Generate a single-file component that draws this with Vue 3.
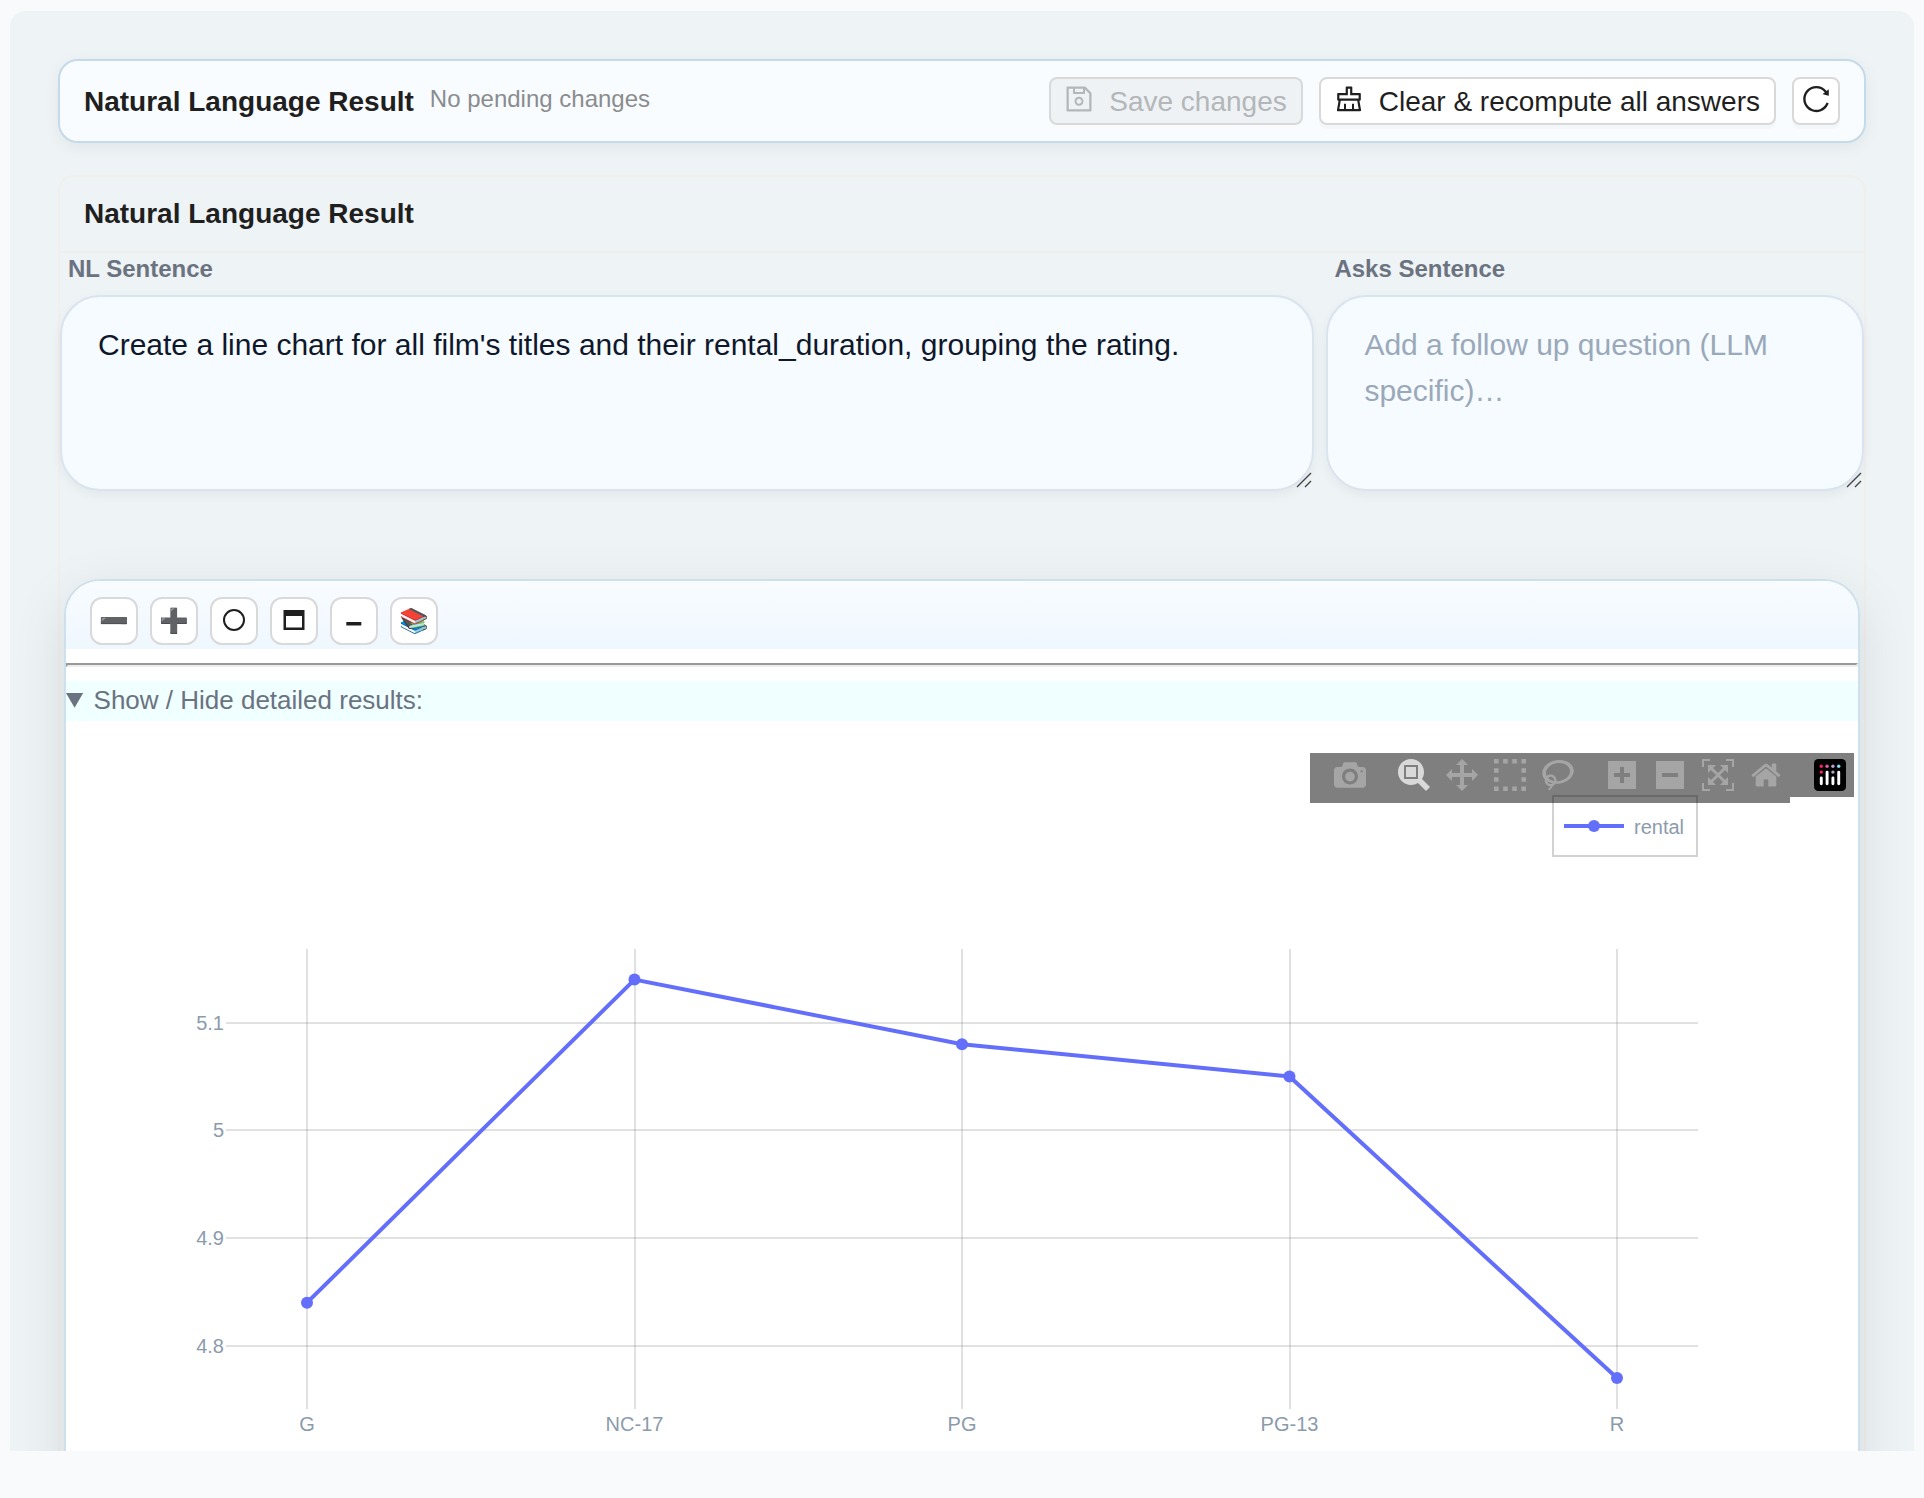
<template>
  <div class="panel">
    <header class="toolbar-card">
      <div class="toolbar-info">
        <h1 class="title">Natural Language Result</h1>
        <span class="status">{{ dirty ? 'Unsaved changes' : 'No pending changes' }}</span>
      </div>
      <div class="toolbar-actions">
        <button class="btn" type="button" :disabled="!dirty" @click="dirty = false">
          <svg class="icon" viewBox="64 64 896 896" aria-hidden="true"><path :d="actionIcons.save" /></svg>
          <span>Save changes</span>
        </button>
        <button class="btn" type="button">
          <svg class="icon" viewBox="64 64 896 896" aria-hidden="true"><path :d="actionIcons.clear" /></svg>
          <span>Clear &amp; recompute all answers</span>
        </button>
        <button class="btn btn-icon" type="button" aria-label="Reload">
          <svg class="icon" viewBox="64 64 896 896" aria-hidden="true"><path :d="actionIcons.reload" /></svg>
        </button>
      </div>
    </header>

    <section class="section">
      <div class="section-head">
        <h2 class="title">Natural Language Result</h2>
      </div>

      <div class="sentences">
        <div class="field">
          <label for="nl-sentence">NL Sentence</label>
          <textarea id="nl-sentence" v-model="sentence" spellcheck="false" @input="dirty = true"></textarea>
          <svg class="grip" viewBox="0 0 16 16" aria-hidden="true"><path d="M1 15L15 1M9 15l6-6" /></svg>
        </div>
        <div class="field">
          <label for="asks-sentence">Asks Sentence</label>
          <textarea
            id="asks-sentence"
            v-model="followUp"
            placeholder="Add a follow up question (LLM specific)…"
            @input="dirty = true"
          ></textarea>
          <svg class="grip" viewBox="0 0 16 16" aria-hidden="true"><path d="M1 15L15 1M9 15l6-6" /></svg>
        </div>
      </div>

      <div class="result-card">
        <div class="result-tools">
          <button class="tool" type="button" aria-label="Decrease">➖</button>
          <button class="tool" type="button" aria-label="Increase">➕</button>
          <button class="tool" type="button" aria-label="Reset">
            <svg viewBox="0 0 24 24" aria-hidden="true"><circle cx="12" cy="11" r="10" class="line" /></svg>
          </button>
          <button class="tool" type="button" aria-label="Maximize">
            <svg viewBox="0 0 24 24" aria-hidden="true">
              <path d="M1.5 1h21v20h-21zM4 7v11.5h16V7z" fill-rule="evenodd" />
            </svg>
          </button>
          <button class="tool" type="button" aria-label="Minimize">
            <svg viewBox="0 0 24 24" aria-hidden="true"><path d="M4.3 13h15v3.4h-15z" /></svg>
          </button>
          <button class="tool" type="button" aria-label="Library">📚</button>
        </div>
        <hr />
        <details open>
          <summary>Show / Hide detailed results:</summary>
          <div class="plot">
            <svg class="chart" viewBox="0 0 1792 820" role="img" aria-label="Rental duration by rating">
              <g class="grid">
                <line v-for="p in points" :key="p.label" :x1="p.x" :x2="p.x" :y1="area.top" :y2="area.bottom" />
                <line v-for="t in ticks" :key="t.label" :x1="area.left" :x2="area.right" :y1="t.y" :y2="t.y" />
              </g>
              <polyline class="trace" :points="tracePath" />
              <circle v-for="p in points" :key="p.label" class="marker" :cx="p.x" :cy="p.y" r="6" />
              <text v-for="t in ticks" :key="t.label" class="tick" :x="area.left - 2" :y="t.y + 7" text-anchor="end">
                {{ t.label }}
              </text>
              <text v-for="p in points" :key="p.label" class="tick" :x="p.x" :y="area.bottom + 22" text-anchor="middle">
                {{ p.label }}
              </text>
              <g>
                <rect class="legend-box" x="1487" y="47" width="144" height="60" />
                <line class="trace" x1="1498" x2="1558" y1="77" y2="77" />
                <circle class="marker" cx="1528" cy="77" r="6" />
                <text class="tick" x="1568" y="85">rental</text>
              </g>
            </svg>

            <div class="modebar">
              <div v-for="(group, i) in modebar" :key="i" class="modebar-group">
                <button
                  v-for="item in group"
                  :key="item.title"
                  class="modebar-btn"
                  :class="{ active: item.title === dragMode }"
                  type="button"
                  :aria-label="item.title"
                  @click="setMode(item)"
                >
                  <svg :viewBox="`0 0 ${item.width} 1000`" aria-hidden="true">
                    <path :d="item.path" transform="matrix(1 0 0 -1 0 850)" />
                  </svg>
                </button>
              </div>
              <div class="modebar-group modebar-logo">
                <a class="modebar-btn" href="#" aria-label="Produced with Plotly">
                  <svg viewBox="0 0 132 132" aria-hidden="true">
                    <rect width="132" height="132" rx="18" fill="#000" />
                    <circle cx="30" cy="30" r="7" fill="#ff1a6b" />
                    <circle cx="30" cy="54" r="7" fill="#ff1a6b" />
                    <circle cx="54" cy="30" r="7" fill="#e0609f" />
                    <circle cx="78" cy="30" r="7" fill="#b7a3d0" />
                    <circle cx="78" cy="54" r="7" fill="#b7a3d0" />
                    <circle cx="102" cy="30" r="7" fill="#86dcf5" />
                    <g fill="#fff">
                      <rect x="24" y="72" width="12" height="36" rx="6" />
                      <rect x="48" y="48" width="12" height="60" rx="6" />
                      <rect x="72" y="72" width="12" height="36" rx="6" />
                      <rect x="96" y="48" width="12" height="60" rx="6" />
                    </g>
                  </svg>
                </a>
              </div>
            </div>
          </div>
        </details>
      </div>
    </section>
  </div>
</template>

<script setup>
import { ref, computed } from 'vue'

const sentence = ref("Create a line chart for all film's titles and their rental_duration, grouping the rating.")
const followUp = ref('')
const dirty = ref(false)
const dragMode = ref('Zoom')

// Chart data
const rows = [
  { label: 'G', value: 4.84 },
  { label: 'NC-17', value: 5.14 },
  { label: 'PG', value: 5.08 },
  { label: 'PG-13', value: 5.05 },
  { label: 'R', value: 4.77 }
]

const area = { left: 160, right: 1632, top: 200, bottom: 660 }
const range = { min: 4.7413, max: 5.1684 }
const firstX = 241
const stepX = 327.5

function scaleY(value) {
  const ratio = (range.max - value) / (range.max - range.min)
  return area.top + ratio * (area.bottom - area.top)
}

const points = computed(() =>
  rows.map((row, i) => ({ label: row.label, x: firstX + i * stepX, y: scaleY(row.value) }))
)
const tracePath = computed(() => points.value.map((p) => `${p.x},${p.y}`).join(' '))
const ticks = [5.1, 5, 4.9, 4.8].map((value) => ({ label: String(value), y: Math.round(scaleY(value)) }))

function setMode(item) {
  if (item.mode) dragMode.value = item.title
}

const actionIcons = {
  save: 'M893.3 293.3L730.7 130.7c-7.5-7.5-16.7-13-26.7-16V112H144c-17.7 0-32 14.3-32 32v736c0 17.7 14.3 32 32 32h736c17.7 0 32-14.3 32-32V338.5c0-17-6.7-33.2-18.7-45.2zM384 184h256v104H384V184zm456 656H184V184h136v136c0 17.7 14.3 32 32 32h320c17.7 0 32-14.3 32-32V205.8l136 136V840zM512 442c-79.5 0-144 64.5-144 144s64.5 144 144 144 144-64.5 144-144-64.5-144-144-144zm0 224c-44.2 0-80-35.8-80-80s35.8-80 80-80 80 35.8 80 80-35.8 80-80 80z',
  clear: 'M899.1 869.6l-53-305.6H864c14.4 0 26-11.6 26-26V346c0-14.4-11.6-26-26-26H618V138c0-14.4-11.6-26-26-26H432c-14.4 0-26 11.6-26 26v182H160c-14.4 0-26 11.6-26 26v192c0 14.4 11.6 26 26 26h17.9l-53 305.6a25.95 25.95 0 0025.6 30.4h723c1.5 0 3-.1 4.4-.4a25.88 25.88 0 0021.2-30zM204 390h272V182h72v208h272v104H204V390zm468 440V674c0-4.4-3.6-8-8-8h-48c-4.4 0-8 3.6-8 8v156H416V674c0-4.4-3.6-8-8-8h-48c-4.4 0-8 3.6-8 8v156H202.8l45.1-260H776l45.1 260H672z',
  reload: 'M909.1 209.3l-56.4 44.1C775.8 155.1 656.2 92 521.9 92 290 92 102.3 279.5 102 511.5 101.7 743.7 289.8 932 521.9 932c181.3 0 335.8-115 394.6-276.1 1.5-4.2-.7-8.9-4.9-10.3l-56.7-19.5a8 8 0 00-10.1 4.8c-1.8 5-3.8 10-5.9 14.9-17.3 41-42.1 77.8-73.7 109.4A344.77 344.77 0 01655.9 829c-42.3 17.9-87.4 27-133.8 27-46.5 0-91.5-9.1-133.8-27A341.5 341.5 0 01279 755.2a342.16 342.16 0 01-73.7-109.4c-17.9-42.4-27-87.4-27-133.9s9.1-91.5 27-133.9c17.3-41 42.1-77.8 73.7-109.4 31.6-31.6 68.4-56.4 109.3-73.8 42.3-17.9 87.4-27 133.8-27 46.5 0 91.5 9.1 133.8 27a341.5 341.5 0 01109.3 73.8c9.9 9.9 19.2 20.4 27.8 31.4l-60.2 47a8 8 0 003 14.1l175.6 43c5 1.2 9.9-2.6 9.9-7.7l.8-180.9c-.1-6.6-7.8-10.3-13-6.2z'
}

const modebar = [
  [
    {
      title: 'Download plot as a png',
      width: 1000,
      path: 'm500 450c-83 0-150-67-150-150 0-83 67-150 150-150 83 0 150 67 150 150 0 83-67 150-150 150z m400 150h-120c-16 0-34 13-39 29l-31 93c-6 15-23 28-40 28h-340c-16 0-34-13-39-28l-31-94c-6-15-23-28-40-28h-120c-55 0-100-45-100-100v-450c0-55 45-100 100-100h800c55 0 100 45 100 100v450c0 55-45 100-100 100z m-400-550c-138 0-250 112-250 250 0 138 112 250 250 250 138 0 250-112 250-250 0-138-112-250-250-250z m365 380c-19 0-35 16-35 35 0 19 16 35 35 35 19 0 35-16 35-35 0-19-16-35-35-35z'
    }
  ],
  [
    {
      title: 'Zoom',
      mode: true,
      width: 1000,
      path: 'm1000-25l-250 251c40 63 63 138 63 218 0 224-182 406-407 406-224 0-406-182-406-406s183-406 407-406c80 0 155 22 218 62l250-250 125 125z m-812 250l0 438 437 0 0-438-437 0z m62 375l313 0 0-312-313 0 0 312z'
    },
    {
      title: 'Pan',
      mode: true,
      width: 1000,
      path: 'm1000 350l-187 188 0-125-250 0 0 250 125 0-188 187-187-187 125 0 0-250-250 0 0 125-188-188 186-187 0 125 252 0 0-250-125 0 187-188 188 188-125 0 0 250 250 0 0-126 187 188z'
    },
    {
      title: 'Box Select',
      mode: true,
      width: 1000,
      path: 'm0 850l0-143 143 0 0 143-143 0z m286 0l0-143 143 0 0 143-143 0z m285 0l0-143 143 0 0 143-143 0z m286 0l0-143 143 0 0 143-143 0z m-857-286l0-143 143 0 0 143-143 0z m857 0l0-143 143 0 0 143-143 0z m-857-285l0-143 143 0 0 143-143 0z m857 0l0-143 143 0 0 143-143 0z m-857-286l0-143 143 0 0 143-143 0z m286 0l0-143 143 0 0 143-143 0z m285 0l0-143 143 0 0 143-143 0z m286 0l0-143 143 0 0 143-143 0z'
    },
    {
      title: 'Lasso Select',
      mode: true,
      width: 1031,
      path: 'm1018 538c-36 207-290 336-568 286-277-48-473-256-436-463 10-57 36-108 76-151-13-66 11-137 68-183 34-28 75-41 114-42l-55-70 0 0c-2-1-3-2-4-3-10-14-8-34 5-45 14-11 34-8 45 4 1 1 2 3 2 5l0 0 113 140c16 11 31 24 45 40 4 3 6 7 8 11 48-3 100 0 151 9 278 48 473 255 436 462z m-624-379c-80 14-149 48-197 96 42 42 109 47 156 9 33-26 47-66 41-105z m-187-74c-19 16-33 37-39 60 50-32 109-55 174-68-42-25-95-24-135 8z m360 75c-34-7-69-9-102-8 8 62-16 128-68 170-73 59-175 54-244-5-9 20-16 40-20 61-28 159 121 317 333 354s407-60 434-217c28-159-121-318-333-355z'
    }
  ],
  [
    {
      title: 'Zoom in',
      width: 875,
      path: 'm1 787l0-875 875 0 0 875-875 0z m687-500l-187 0 0-187-125 0 0 187-188 0 0 125 188 0 0 187 125 0 0-187 187 0 0-125z'
    },
    {
      title: 'Zoom out',
      width: 875,
      path: 'm0 788l0-876 876 0 0 876-876 0z m688-500l-500 0 0 125 500 0 0-125z'
    },
    {
      title: 'Autoscale',
      width: 1000,
      path: 'm250 850l-187 0-63 0 0-62 0-188 63 0 0 188 187 0 0 62z m688 0l-188 0 0-62 188 0 0-188 62 0 0 188 0 62-62 0z m-875-938l0 188-63 0 0-188 0-62 63 0 187 0 0 62-187 0z m875 188l0-188-188 0 0-62 188 0 62 0 0 62 0 188-62 0z m-125 188l-1 0-93-94-156 156 156 156 92-93 2 0 0 250-250 0 0-2 93-92-156-156-156 156 94 92 0 2-250 0 0-250 0 0 93 93 157-156-157-156-93 94 0 0 0-250 250 0 0 0-94 93 156 157 156-157-93-93 0 0 250 0 0 250z'
    },
    {
      title: 'Reset axes',
      width: 929,
      path: 'm786 296v-267q0-15-11-26t-25-10h-214v214h-143v-214h-214q-15 0-25 10t-11 26v267q0 1 0 2t0 2l321 264 321-264q1-1 1-4z m124 39l-34-41q-5-5-12-6h-2q-7 0-12 3l-386 322-386-322q-7-4-13-4-7 2-12 7l-35 41q-4 5-3 13t6 12l401 334q18 15 42 15t43-15l136-114v109q0 8 5 13t13 5h107q8 0 13-5t5-13v-227l122-102q5-5 6-12t-4-13z'
    }
  ]
]
</script>

<style>
body {
  background: #f8fafc;
}
</style>

<style scoped>
.panel {
  box-sizing: border-box;
  height: calc(100vh - 58px);
  margin: 11px 10px 0;
  padding: 48px;
  overflow-y: auto;
  scrollbar-width: none;
  background: #eef3f6;
  border-radius: 16px 16px 0 0;
  font-family: "Liberation Sans", Arial, sans-serif;
  color: #1f1f1f;
}
.panel *,
.panel *::before {
  box-sizing: border-box;
}

/* Top toolbar */
.toolbar-card {
  display: flex;
  justify-content: space-between;
  align-items: center;
  gap: 16px;
  padding: 16px 24px;
  background: #f9fcff;
  border: 2px solid #c5dae8;
  border-radius: 20px;
  box-shadow: 0 4px 16px rgba(0, 0, 0, 0.06);
}
.toolbar-info {
  display: flex;
  align-items: flex-start;
  gap: 16px;
  padding-top: 2px;
}
.title {
  margin: 0;
  font-size: 28px;
  line-height: 44px;
  font-weight: 700;
}
.status {
  font-size: 24px;
  line-height: 38px;
  color: #8a8c8e;
}
.toolbar-actions {
  display: flex;
  gap: 16px;
}
.btn {
  display: inline-flex;
  align-items: center;
  gap: 16px;
  height: 48px;
  padding: 2px 14px 0;
  background: #fff;
  border: 2px solid #d9d9d9;
  border-radius: 8px;
  box-shadow: 0 4px 0 rgba(0, 0, 0, 0.02);
  font: inherit;
  font-size: 28px;
  color: #1f1f1f;
  cursor: pointer;
}
.btn:disabled {
  background: #eef2f5;
  box-shadow: none;
  color: #b3b7b9;
  cursor: not-allowed;
}
.btn-icon {
  width: 48px;
  padding: 2px 0 0;
  justify-content: center;
}
.icon {
  width: 28px;
  height: 28px;
  margin-bottom: 6px;
  fill: currentColor;
}

/* Section */
.section {
  margin-top: 32px;
  border: 2px solid #f0efee;
  border-radius: 16px;
}
.section-head {
  padding: 15px 24px;
  border-bottom: 2px solid #f0efee;
}
.sentences {
  display: grid;
  grid-template-columns: 7fr 3fr;
  gap: 12px;
}
.field {
  position: relative;
  display: flex;
  flex-direction: column;
}
.field label {
  padding: 0 8px;
  font-size: 24px;
  line-height: 32px;
  font-weight: 700;
  color: #6b7280;
}
.field textarea {
  height: 196px;
  margin-top: 10px;
  padding: 25px 36px;
  background: #f6fbff;
  border: 2px solid #dbe3ef;
  border-radius: 40px;
  box-shadow: 0 4px 12px rgba(0, 0, 0, 0.05);
  font: inherit;
  font-size: 30px;
  line-height: 46px;
  color: #0f172a;
  outline: none;
  resize: none;
}
.field textarea::placeholder {
  color: #9aa9b9;
}
/* Resize handle over the text box corner */
.grip {
  position: absolute;
  right: 2px;
  bottom: 3px;
  width: 16px;
  height: 16px;
  fill: none;
  stroke: #444;
  stroke-width: 1.4;
  pointer-events: none;
}

/* Result card */
.result-card {
  margin: 88px 4px 0;
  overflow: hidden;
  background: #fff;
  border: 2px solid #cde0eb;
  border-radius: 36px;
  box-shadow: 0 16px 56px rgba(0, 0, 0, 0.1);
}
.result-tools {
  display: flex;
  gap: 12px;
  padding: 16px 24px 4px;
  background: linear-gradient(#f8fcff, #eff7ff);
}
.tool {
  display: flex;
  align-items: center;
  justify-content: center;
  width: 48px;
  height: 48px;
  padding: 0;
  background: #fff;
  border: 2px solid #d9d9d9;
  border-radius: 12px;
  font-size: 24px;
  line-height: 28px;
  color: #1f1f1f;
  cursor: pointer;
}
.tool svg {
  width: 24px;
  height: 24px;
  fill: currentColor;
}
.tool .line {
  fill: none;
  stroke: currentColor;
  stroke-width: 2;
}
hr {
  margin: 14px 0;
  border: 2px inset #ededed;
}
summary {
  padding-bottom: 2px;
  font-size: 26px;
  line-height: 38px;
  background: #f0ffff;
  color: #6b7280;
  cursor: pointer;
}

/* Chart */
.plot {
  position: relative;
  padding-top: 28px;
}
.chart {
  display: block;
  width: 100%;
  height: auto;
}
.grid line {
  stroke: rgba(120, 120, 120, 0.22);
  stroke-width: 2;
  shape-rendering: crispEdges;
}
.trace {
  fill: none;
  stroke: #636efa;
  stroke-width: 4;
}
.marker {
  fill: #636efa;
}
.tick {
  font-size: 20px;
  fill: #8c9bac;
}
.legend-box {
  fill: #fff;
  stroke: #d2d2d2;
  stroke-width: 2;
}

/* Floats over the top right corner of the chart */
.modebar {
  position: absolute;
  top: 32px;
  right: 4px;
  display: flex;
  align-items: flex-start;
}
.modebar-group {
  display: flex;
  height: 50px;
  padding-left: 16px;
  background: rgba(0, 0, 0, 0.5);
}
.modebar-logo {
  height: 44px;
}
.modebar-btn {
  height: 44px;
  padding: 6px 8px;
  background: none;
  border: none;
  cursor: pointer;
}
.modebar-btn svg {
  display: block;
  width: 32px;
  height: 32px;
}
.modebar-btn path {
  fill: rgba(255, 255, 255, 0.3);
}
.modebar-btn:hover path,
.modebar-btn.active path {
  fill: rgba(255, 255, 255, 0.7);
}
</style>
